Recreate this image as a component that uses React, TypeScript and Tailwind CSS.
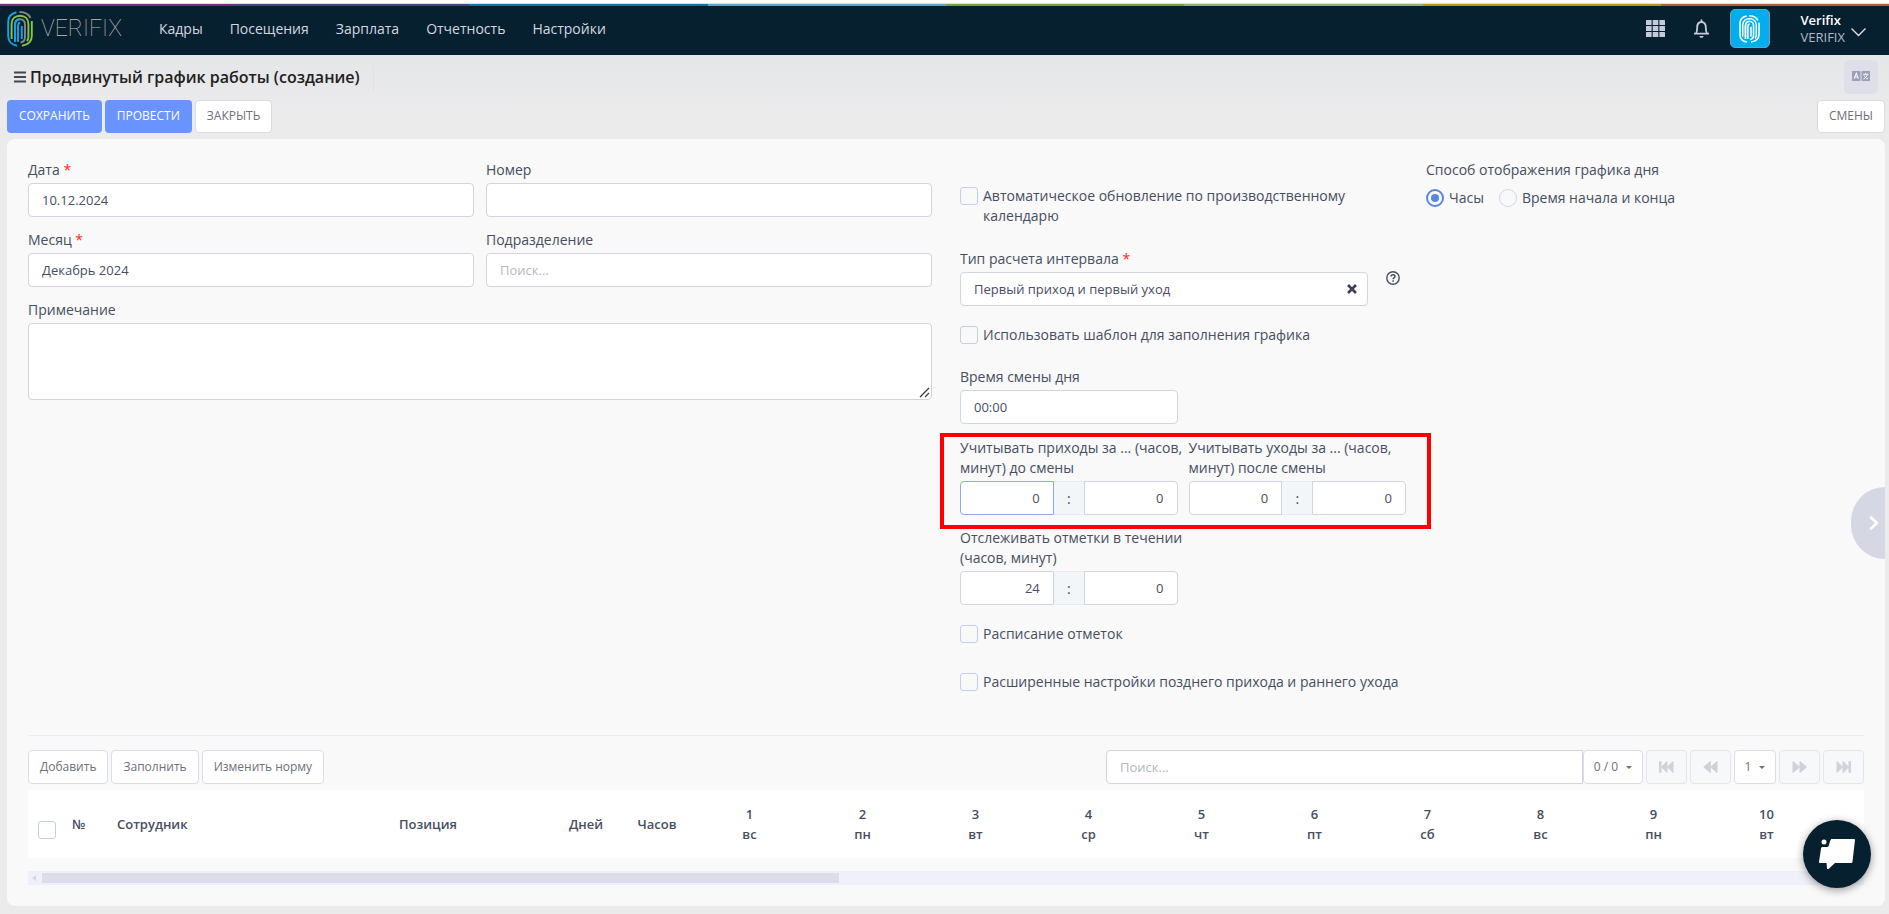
import { useState, type ReactNode } from "react";
import { clsx } from "clsx";

const stripes = [
  "w-[231px] bg-[#7b2a7c]",
  "flex-1 bg-[#43477f]",
  "flex-1 bg-[#0077b3]",
  "flex-1 bg-[#5aa7c9]",
  "flex-1 bg-[#72a42f]",
  "flex-1 bg-[#8fb274]",
  "flex-1 bg-[#b5990f]",
  "w-[228px] bg-[#b6602c]",
];

const menu = ["Кадры", "Посещения", "Зарплата", "Отчетность", "Настройки"];

const days = [
  { day: 1, week: "вс" },
  { day: 2, week: "пн" },
  { day: 3, week: "вт" },
  { day: 4, week: "ср" },
  { day: 5, week: "чт" },
  { day: 6, week: "пт" },
  { day: 7, week: "сб" },
  { day: 8, week: "вс" },
  { day: 9, week: "пн" },
  { day: 10, week: "вт" },
];

const inputClass =
  "block h-[34px] w-full rounded border border-[#d1d5de] bg-white px-[13px] text-[13px] text-[#464e5f] outline-none placeholder:text-[#b5b5c3]";

function Fingerprint({ className, mono }: { className: string; mono?: boolean }) {
  const blue = mono ? "#ffffff" : "#12a4e4";
  const green = mono ? "#ffffff" : "#8bc53f";
  const gray = mono ? "#ffffff" : "#85888c";
  return (
    <svg viewBox="0 0 26 36" preserveAspectRatio="none" fill="none" strokeWidth="1.9" className={className}>
      <path d="M9.5 1.2C4 2.4 1.2 6.500 1.200 11v14c0 5 3.300 9 8.800 9.800" stroke={blue} />
      <path d="M12.500 1C17.500 1 21.500 3 23.500 7" stroke={gray} />
      <path d="M24.800 10v15c0 5-3.300 8.500-9.800 9.800" stroke={green} />
      <path d="M4.600 28V13c0-5 3.400-8.300 8.400-8.300s8.400 3.300 8.400 8.300v13c0 1.800-.5 3-1.600 4" stroke={green} />
      <path d="M8 30V14c0-3.600 1.800-5.800 5-5.800s5 2.200 5 5.800v12c0 3-1.500 5-4.500 5.500" stroke={gray} />
      <path d="M11 31V15.500c0-2.600 1-3.800 2.200-3.800" stroke={blue} />
      <path d="M8 31V14c0-3.600 1.800-5.800 5-5.800" stroke={blue} />
      <path d="M14.800 28V15" stroke={blue} />
    </svg>
  );
}

function Header() {
  return (
    <header>
      <div className="h-1 border-b border-[#dcdfe0] bg-white" />
      <div className="flex h-0.5">
        {stripes.map((stripe) => (
          <div key={stripe} className={stripe} />
        ))}
      </div>
      <nav className="flex h-[49px] items-center bg-[#07202f] pr-[23px] pb-1 pl-[7px]">
        <a href="#" className="flex items-center gap-2">
          <Fingerprint className="h-9 w-[26px]" />
          <span className="font-[Roboto] text-[23px] leading-9 font-thin text-[#c4bfbd]">VERIFIX</span>
        </a>
        <ul className="ml-[37px] flex flex-1 gap-[27px] text-[14px] leading-5 text-[#d3d8e0]">
          {menu.map((item) => (
            <li key={item}>
              <a href="#">{item}</a>
            </li>
          ))}
        </ul>
        <button type="button" aria-label="Приложения" className="mr-7">
          <svg width="19" height="17" viewBox="0 0 19 17" fill="#c5cbdb">
            {[0, 6, 12].map((y) =>
              [0, 6.7, 13.4].map((x) => <rect key={`${x}-${y}`} x={x} y={y} width="5.6" height="5" rx="0.5" />)
            )}
          </svg>
        </button>
        <button type="button" aria-label="Уведомления" className="mr-5">
          <svg width="17" height="19" viewBox="0 0 17 19" fill="none" stroke="#c5cbdb" strokeWidth="1.8">
            <path d="M1 14.600h15M3 14.500c1-1.500 1.200-3 1.200-6C4.200 5 6 3 8.500 3s4.300 2 4.300 5.500c0 3 .2 4.500 1.200 6" />
            <path d="M8.500 0.500v2.500" />
            <path d="M6.300 17c.4 1.300 1.200 1.800 2.200 1.800s1.800-.5 2.200-1.800z" fill="#c5cbdb" stroke="none" />
          </svg>
        </button>
        <button
          type="button"
          aria-label="Профиль"
          className="mr-[31px] flex h-[39px] w-10 items-center justify-center rounded-[5px] border border-[#8b97a1] bg-[#00aeef]"
        >
          <Fingerprint mono className="h-7 w-[21px]" />
        </button>
        <button type="button" className="flex items-center gap-[6px] text-left text-[13px] leading-[17px]">
          <span>
            <span className="block font-semibold text-white">Verifix</span>
            <span className="block text-[#b3b8c9]">VERIFIX</span>
          </span>
          <svg width="15" height="9" viewBox="0 0 15 9" fill="none" stroke="#dfe3ea" strokeWidth="1.3" className="mt-2">
            <path d="M0.500 0.500l7 7 7-7" />
          </svg>
        </button>
      </nav>
    </header>
  );
}

function Field({ id, label, required, children }: { id: string; label: string; required?: boolean; children: ReactNode }) {
  return (
    <div>
      <label htmlFor={id} className="mb-[3px] block leading-5 whitespace-pre">
        {label} {required && <span className="text-[#ff1f1f]">*</span>}
      </label>
      {children}
    </div>
  );
}

function Checkbox({ label, className }: { label: string; className?: string }) {
  return (
    <label className={clsx("flex items-start gap-[5px] leading-5", className)}>
      <input
        type="checkbox"
        className="mt-px size-[18px] shrink-0 appearance-none rounded-[3px] border border-[#c3cee9] bg-[#f9f9f9] checked:bg-[#5d8be0]"
      />
      {label}
    </label>
  );
}

function Radio({ label, checked, onChange }: { label: string; checked: boolean; onChange: () => void }) {
  return (
    <label className="flex items-center gap-[5px] leading-5">
      <input
        type="radio"
        name="view"
        checked={checked}
        onChange={onChange}
        className="size-[18px] appearance-none rounded-full border border-[#cfd8ee] checked:border-2 checked:border-[#5b86e0] checked:bg-[#5b86e0] checked:bg-clip-content checked:p-[3px]"
      />
      {label}
    </label>
  );
}

function TimePair({ id, label, hours, active }: { id: string; label: string; hours: string; active?: boolean }) {
  return (
    <Field id={id} label={label}>
      <div className="flex">
        <input
          id={id}
          defaultValue={hours}
          className={clsx(
            "h-[34px] w-0 flex-1 rounded-l border bg-white px-[13px] text-right text-[13px] text-[#464e5f] outline-none",
            active ? "border-[#8ea8f5]" : "border-[#d1d5de]"
          )}
        />
        <span className="flex w-[30px] items-center justify-center border-y border-[#e8eaf2] bg-[#f3f6f9]">:</span>
        <input
          aria-label="Минуты"
          defaultValue="0"
          className="h-[34px] w-0 flex-1 rounded-r border border-[#d1d5de] bg-white px-[13px] text-right text-[13px] text-[#464e5f] outline-none"
        />
      </div>
    </Field>
  );
}

function PagerButton({ label, children }: { label: string; children: ReactNode }) {
  return (
    <button
      type="button"
      disabled
      aria-label={label}
      className="flex h-[34px] w-[41px] items-center justify-center rounded border border-[#e4e6ec] bg-[#f7f8fa] text-[#d0d1da]"
    >
      <svg width="16" height="12" viewBox="0 0 16 12" fill="currentColor" stroke="currentColor" strokeWidth="1" strokeLinejoin="round">
        {children}
      </svg>
    </button>
  );
}

function Caret() {
  return <span className="border-x-[3px] border-t-[3px] border-x-transparent border-t-[#6c7079]" />;
}

function ScheduleForm() {
  const [view, setView] = useState("hours");

  return (
    <form className="grid grid-cols-[932fr_466fr_438fr] text-[14px] text-[#464e5f]">
      {/* Document */}
      <div className="pr-7">
        <div className="grid grid-cols-2 gap-x-3 gap-y-[13px]">
          <Field id="date" label="Дата" required>
            <input id="date" defaultValue="10.12.2024" className={inputClass} />
          </Field>
          <Field id="number" label="Номер">
            <input id="number" className={inputClass} />
          </Field>
          <Field id="month" label="Месяц" required>
            <input id="month" defaultValue="Декабрь 2024" className={inputClass} />
          </Field>
          <Field id="division" label="Подразделение">
            <input id="division" placeholder="Поиск..." className={inputClass} />
          </Field>
          <div className="col-span-2">
            <Field id="note" label="Примечание">
              <div className="relative">
                <textarea
                  id="note"
                  className="block h-[77px] w-full resize-none rounded border border-[#d1d5de] bg-white px-[13px] py-2 text-[13px] outline-none"
                />
                <svg
                  width="11"
                  height="11"
                  viewBox="0 0 11 11"
                  stroke="#3c3c3c"
                  strokeWidth="1.3"
                  className="pointer-events-none absolute right-0.5 bottom-0.5"
                >
                  <path d="M1 10L10 1M6 10l4-4" />
                </svg>
              </div>
            </Field>
          </div>
        </div>
      </div>

      {/* Shift settings */}
      <div className="pt-[26px] pr-5">
        <Checkbox label="Автоматическое обновление по производственному календарю" className="pr-10" />
        <div className="mt-[23px] flex">
          <div className="flex-1">
            <Field id="interval" label="Тип расчета интервала" required>
              <div className="relative">
                <input id="interval" defaultValue="Первый приход и первый уход" className={inputClass} />
                <button type="button" aria-label="Очистить" className="absolute inset-y-0 right-0 px-[11px]">
                  <svg width="10" height="10" viewBox="0 0 10 10" fill="none" stroke="#3f4254" strokeWidth="2.6">
                    <path d="M1 1l8 8M9 1l-8 8" />
                  </svg>
                </button>
              </div>
            </Field>
          </div>
          <button type="button" aria-label="Справка" className="mr-1.5 ml-[18px] h-[14px] self-center">
            <svg width="14" height="14" viewBox="0 0 14 14" fill="none" stroke="#464e5f">
              <circle cx="7" cy="7" r="6.2" strokeWidth="1.4" />
              <path d="M5 5.600C5 4.400 5.800 3.700 7 3.700s2 .7 2 1.700c0 1.400-1.900 1.500-1.900 2.800" strokeWidth="1.5" />
              <circle cx="7.1" cy="10" r="0.5" strokeWidth="0.8" fill="#464e5f" />
            </svg>
          </button>
        </div>
        <Checkbox label="Использовать шаблон для заполнения графика" className="mt-[19px]" />
        <div className="mt-[22px] grid grid-cols-2 gap-x-[11px]">
          <Field id="change" label="Время смены дня">
            <input id="change" defaultValue="00:00" className={inputClass} />
          </Field>
        </div>
        <div className="relative mt-[14px] grid grid-cols-2 gap-x-[11px]">
          <TimePair id="before" label={"Учитывать приходы за ... (часов,\nминут) до смены"} hours="0" active />
          <TimePair id="after" label={"Учитывать уходы за ... (часов,\nминут) после смены"} hours="0" />
          <div className="pointer-events-none absolute -top-[5px] -right-[25px] -bottom-[14px] -left-5 border-4 border-[#ff0000]" />
        </div>
        <div className="mt-[13px] grid grid-cols-2 gap-x-[11px]">
          <TimePair id="track" label={"Отслеживать отметки в течении\n(часов, минут)"} hours="24" />
        </div>
        <Checkbox label="Расписание отметок" className="mt-[19px]" />
        <Checkbox label="Расширенные настройки позднего прихода и раннего ухода" className="mt-7" />
      </div>

      {/* Day view */}
      <fieldset>
        <legend className="leading-5">Способ отображения графика дня</legend>
        <div className="mt-2 flex gap-[15px]">
          <Radio label="Часы" checked={view === "hours"} onChange={() => setView("hours")} />
          <Radio label="Время начала и конца" checked={view === "range"} onChange={() => setView("range")} />
        </div>
      </fieldset>
    </form>
  );
}

function Toolbar() {
  return (
    <div className="flex justify-between text-[12px] text-[#6c7079]">
      <div className="flex gap-[3px]">
        {["Добавить", "Заполнить", "Изменить норму"].map((label) => (
          <button key={label} type="button" className="h-[34px] rounded border border-[#dadde4] bg-white px-[11px]">
            {label}
          </button>
        ))}
      </div>
      <div className="flex gap-[3px]">
        <div className="flex">
          <input
            aria-label="Поиск"
            placeholder="Поиск..."
            className="h-[34px] w-[477px] rounded-l border border-[#d1d5de] bg-white px-[13px] text-[13px] outline-none placeholder:text-[#b5b5c3]"
          />
          <button type="button" className="flex w-[60px] items-center justify-center gap-2 rounded border border-[#dadde4] bg-white">
            0 / 0 <Caret />
          </button>
        </div>
        <PagerButton label="Первая страница">
          <path d="M0.500 0.500h1.500v11H0.500zM8 0.500v11L2.500 6zM14 0.500v11L8.500 6z" />
        </PagerButton>
        <PagerButton label="Предыдущая страница">
          <path d="M7.300 0.500v11L0.800 6zM14 0.500v11L7.800 6z" />
        </PagerButton>
        <button type="button" className="flex w-[42px] items-center justify-center gap-2 rounded border border-[#dadde4] bg-white">
          1 <Caret />
        </button>
        <PagerButton label="Следующая страница">
          <path d="M1 0.500v11L7.500 6zM8 0.500v11L14.500 6z" />
        </PagerButton>
        <PagerButton label="Последняя страница">
          <path d="M1 0.500v11L6.500 6zM7 0.500v11L12.500 6zM13 0.500h1.500v11h-1.500z" />
        </PagerButton>
      </div>
    </div>
  );
}

function StaffTable() {
  return (
    <>
      <table className="mt-1.5 w-full table-fixed bg-white text-left text-[13px] leading-5 text-[#464e5f]">
        <thead>
          <tr className="h-[68px]">
            <th className="w-[35px] pt-3 pl-[10px]">
              <input
                type="checkbox"
                aria-label="Выбрать всех"
                className="block size-[18px] appearance-none rounded-[3px] border border-[#c3cee9] bg-white"
              />
            </th>
            <th className="w-[54px] pl-[9px] font-semibold">№</th>
            <th className="w-[282px] font-semibold">Сотрудник</th>
            <th className="w-[152px] font-semibold">Позиция</th>
            <th className="w-[70px] text-center font-semibold">Дней</th>
            <th className="w-[72px] text-center font-semibold">Часов</th>
            {days.map(({ day, week }) => (
              <th key={day} className="w-[113px] text-center font-semibold">
                {day}
                <br />
                {week}
              </th>
            ))}
            <th />
          </tr>
        </thead>
      </table>
      {/* Horizontal scroll */}
      <div className="mt-[13px] flex h-[14px] items-center bg-[#eff0fa]">
        <span className="mr-[6px] ml-1 border-y-[3px] border-r-4 border-y-transparent border-r-[#d5d5e6]" />
        <span className="h-[10px] w-[797px] bg-[#dddce9]" />
      </div>
    </>
  );
}

export default function App() {
  return (
    <div className="relative min-h-screen bg-[#e9e9eb] font-['Open_Sans',sans-serif]">
      <Header />

      <main className="bg-linear-to-b from-[#e5e6e8] to-[#ebebec] to-[60px] pr-1 pb-2 pl-[7px]">
        <div className="flex h-[45px] items-center pr-[7px] pb-0.5 pl-[7px]">
          <svg width="12" height="12" viewBox="0 0 12 12" stroke="#45474d" strokeWidth="1.8" className="mr-1">
            <path d="M0 1.500h12M0 6h12M0 10.500h12" />
          </svg>
          <h1 className="border-r border-[#e2e2e5] pr-[13px] text-[16px] leading-[30px] font-semibold text-[#212121]">
            Продвинутый график работы (создание)
          </h1>
          <button
            type="button"
            aria-label="Язык"
            className="ml-auto flex size-[34px] items-center justify-center rounded-[5px] bg-[#dedfe8]"
          >
            <svg width="18" height="10" viewBox="0 0 18 10" className="mb-0.5">
              <rect width="8.5" height="10" rx="0.8" fill="#9a9fba" />
              <rect x="9.5" width="8.5" height="10" rx="0.8" fill="#9a9fba" />
              <path d="M2.200 7.800L4.300 2.300l2.100 5.500M3 6h2.600" fill="none" stroke="#f4f4f8" strokeWidth="1.1" />
              <path d="M11 3.300h5.500M13.700 2v1.300M15.500 3.300c-.5 2-2 3.800-4 4.700M12 4.500c.7 1.500 2.200 2.900 4 3.500" fill="none" stroke="#f4f4f8" strokeWidth="1" />
            </svg>
          </button>
        </div>

        <div className="flex gap-[3px] text-[12px]">
          <button type="button" className="h-[33px] rounded bg-[#6993ff] px-3 pb-0.5 text-white">
            СОХРАНИТЬ
          </button>
          <button type="button" className="h-[33px] rounded bg-[#6993ff] px-3 pb-0.5 text-white">
            ПРОВЕСТИ
          </button>
          <button type="button" className="h-[33px] rounded border border-[#d9dce4] bg-white px-[11px] pb-0.5 text-[#6c7079]">
            ЗАКРЫТЬ
          </button>
          <button type="button" className="ml-auto h-[33px] rounded border border-[#d9dce4] bg-white px-[11px] pb-0.5 text-[#6c7079]">
            СМЕНЫ
          </button>
        </div>

        <section className="relative mt-1.5 rounded-lg bg-[#f9f9f9] p-[21px]">
          <ScheduleForm />
          <hr className="mt-[43px] mb-[14px] border-[#ebedf0]" />
          <Toolbar />
          <StaffTable />

          <button
            type="button"
            aria-label="Развернуть"
            className="absolute top-[348px] right-0 flex h-[72px] w-[34px] items-center justify-end rounded-l-full bg-[#d5d7e2] pr-1.5"
          >
            <svg width="10" height="14" viewBox="0 0 10 14" fill="none" stroke="#ffffff" strokeWidth="2.6" strokeLinecap="round" strokeLinejoin="round">
              <path d="M2 1.500L8 7l-6 5.500" />
            </svg>
          </button>
        </section>
      </main>

      <button
        type="button"
        aria-label="Чат"
        className="fixed right-[18px] bottom-[26px] flex size-[68px] items-center justify-center rounded-full bg-[#07202f] shadow-[0_2px_8px_rgba(0,0,0,0.4)]"
      >
        <svg width="36" height="30" viewBox="0 0 36 30" fill="#ffffff">
          <circle cx="5" cy="3" r="2.5" />
          <path d="M13 0h22c.7 0 1 .4 1 1l-2.500 21.500c-.2 1-.6 1.500-1.500 1.500H16l-6.500 6c-.8.500-1.500.2-1.500-.8L7.500 24H1c-.7 0-1-.3-1-1L2 9.500C2.200 8.500 2.600 8 3.500 8H8c1 0 1.500-.4 1.800-1.400l1.500-5C11.700.5 12 0 13 0z" />
        </svg>
      </button>
    </div>
  );
}
